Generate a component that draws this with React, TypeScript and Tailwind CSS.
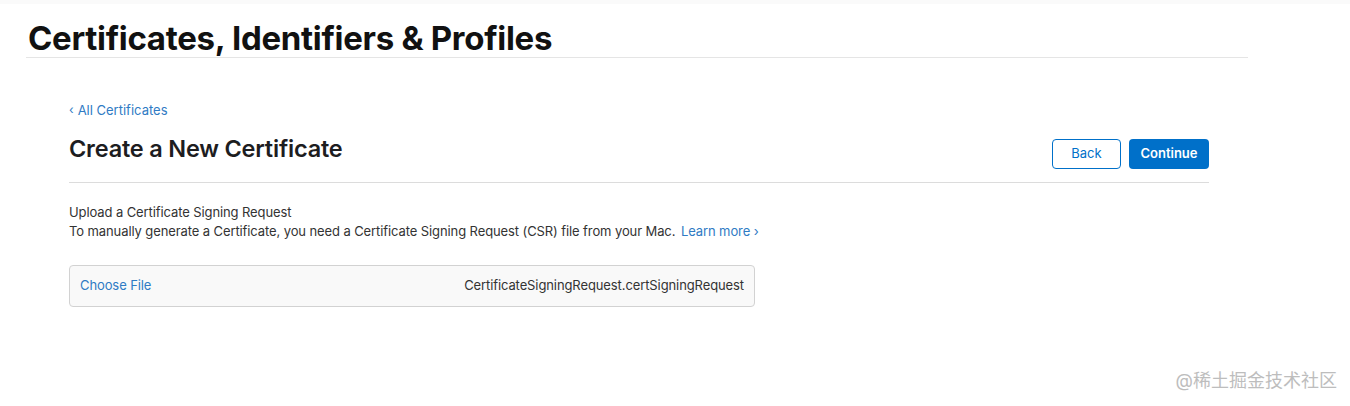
export default function App() {
  return (
    <div
      className="relative w-[1350px] h-[406px] bg-white text-[#1d1d1f] overflow-hidden"
      style={{ fontFamily: 'Inter, "Noto Sans CJK SC", sans-serif' }}
    >
      <div className="h-[4px] bg-[#fafafa]" />

      {/* Page header */}
      <div className="ml-[28px] w-[1220px]">
        <h1 className="pt-[15px] text-[33px] leading-[38px] font-bold tracking-[-0.3px] text-[#111]">
          Certificates, Identifiers &amp; Profiles
        </h1>
        <div className="h-px bg-[#e5e5e5] ml-[-2px]" />
      </div>

      {/* Content */}
      <div className="ml-[69px] w-[1140px] pt-[44px]">
        <a className="flex items-center gap-[4px] text-[13px] leading-[16px] text-[#2f7bc4]">
          <span className="text-[12px]">‹</span>
          <span>All Certificates</span>
        </a>

        <div className="mt-[9px] flex justify-between">
          <h2 className="mt-[7px] text-[23.5px] leading-[30px] font-semibold tracking-[-0.2px] text-[#1d1d1f]">
            Create a New Certificate
          </h2>
          <div className="mt-[12px] flex gap-[8px]">
            <button className="h-[30px] w-[69px] rounded-[4px] border border-[#0070c9] bg-white text-[13px] text-[#0070c9]">
              Back
            </button>
            <button className="h-[30px] w-[80px] rounded-[4px] bg-[#0070c9] text-[13px] font-semibold text-white">
              Continue
            </button>
          </div>
        </div>

        <div className="mt-[13px] h-px bg-[#dcdcdc]" />

        <div className="mt-[20px] text-[13px] leading-[18px] tracking-[-0.1px] text-[#333]">
          Upload a Certificate Signing Request
        </div>
        <div className="mt-[1px] text-[13px] leading-[18px] tracking-[-0.1px] text-[#333]">
          To manually generate a Certificate, you need a Certificate Signing Request (CSR) file from your Mac.{' '}
          <a className="ml-[2px] text-[#2f7bc4]">Learn more ›</a>
        </div>

        <div className="mt-[25px] flex h-[42px] w-[686px] items-center justify-between rounded-[4px] border border-[#d2d2d2] bg-[#f9f9f9] px-[10px] text-[13px] tracking-[-0.1px]">
          <span className="text-[#2f7bc4]">Choose File</span>
          <span className="text-[#333]">CertificateSigningRequest.certSigningRequest</span>
        </div>
      </div>

      <div className="absolute right-[13px] bottom-[14px] text-[18px] leading-[22px] text-[#bdbdbd]">
        @稀土掘金技术社区
      </div>
    </div>
  );
}
